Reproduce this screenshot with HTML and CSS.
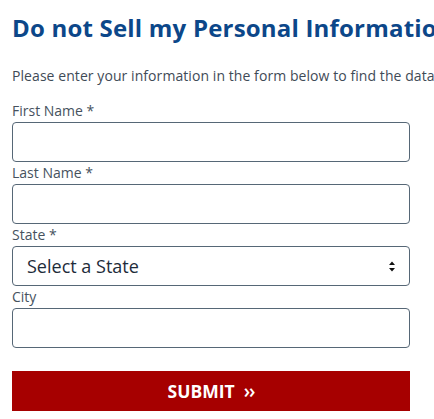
FILE: index.html
```html
<!DOCTYPE html>
<html lang="en">
<head>
<meta charset="utf-8">
<title>Do not Sell my Personal Information</title>
<link rel="stylesheet" href="styles.css">
</head>
<body>
<main class="page">
  <h1 class="title">Do not Sell my Personal Information</h1>
  <p class="intro">Please enter your information in the form below to find the data we have about you.</p>
  <form class="form">
    <label class="label" for="first">First Name *</label>
    <input class="field" id="first" type="text">
    <label class="label" for="last">Last Name *</label>
    <input class="field" id="last" type="text">
    <label class="label" for="state">State *</label>
    <div class="select-wrap">
      <select class="field select" id="state">
        <option>Select a State</option>
      </select>
      <svg class="arrows" width="6" height="11" viewBox="0 0 6 11" aria-hidden="true">
        <path d="M0 4 L3 0.5 L6 4 Z" fill="#111"/>
        <path d="M0 7 L3 10.5 L6 7 Z" fill="#111"/>
      </svg>
    </div>
    <label class="label" for="city">City</label>
    <input class="field" id="city" type="text">
    <button class="submit" type="button">SUBMIT<span class="chev">&rsaquo;&rsaquo;</span></button>
  </form>
</main>
</body>
</html>
```
FILE: styles.css
```css
html, body {
  margin: 0;
  padding: 0;
  background: #ffffff;
  overflow: hidden;
}
body {
  font-family: "Open Sans", "Liberation Sans", sans-serif;
  color: #3d4a56;
}
.page {
  padding: 12px 0 0 12px;
  width: 398px;
}
.title {
  margin: 0;
  font-size: 24px;
  line-height: 32px;
  font-weight: 700;
  letter-spacing: 0.2px;
  color: #0c4789;
  white-space: nowrap;
}
.intro {
  margin: 22px 0 14px;
  font-size: 14px;
  line-height: 19px;
  letter-spacing: 0.07px;
  color: #3f4b57;
  white-space: nowrap;
}
.form {
  display: flex;
  flex-direction: column;
}
.label {
  font-size: 14px;
  line-height: 22px;
  color: #46525e;
}
.label:first-child {
  line-height: 23px;
}
.field {
  box-sizing: border-box;
  display: block;
  width: 398px;
  height: 40px;
  margin: 0;
  border: 1px solid #566776;
  border-radius: 4px;
  background: #ffffff;
  font-family: "Open Sans", "Liberation Sans", sans-serif;
  font-size: 18px;
  color: #1e2c3a;
  padding: 0 14px;
}
.select-wrap {
  position: relative;
  width: 398px;
}
.select {
  -webkit-appearance: none;
  appearance: none;
  padding: 0 14px;
}
.arrows {
  position: absolute;
  right: 15px;
  top: 15px;
  pointer-events: none;
}
.submit {
  box-sizing: border-box;
  margin-top: 23px;
  width: 398px;
  height: 40px;
  border: 0;
  border-radius: 0;
  background: #a60000;
  color: #ffffff;
  font-family: "Open Sans", "Liberation Sans", sans-serif;
  font-size: 17.5px;
  font-weight: 700;
  padding: 0;
}
.chev {
  margin-left: 9px;
  font-weight: 600;
  font-size: 19px;
  letter-spacing: -1px;
}
```
